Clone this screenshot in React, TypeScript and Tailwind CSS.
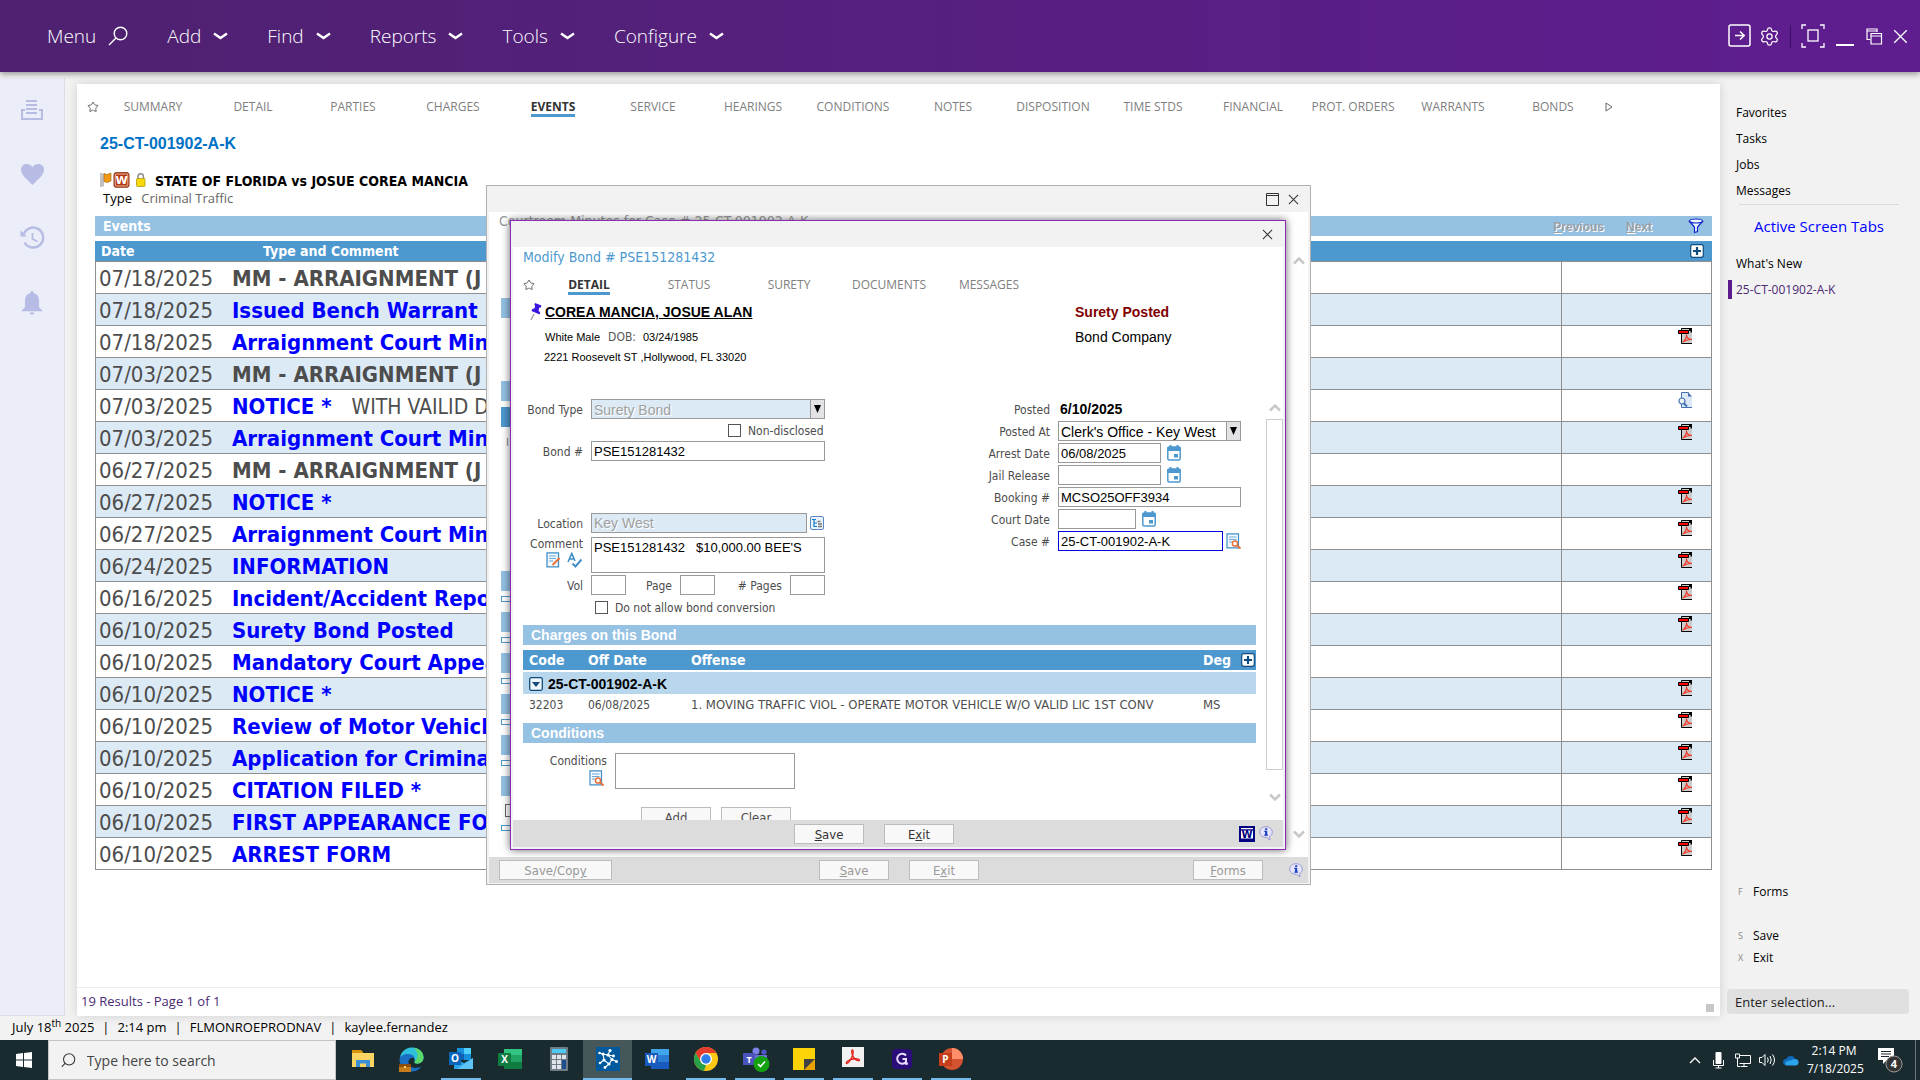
import React, { useState } from 'react';
import { Settings, Star, Search } from 'lucide-react';

const MENUS = ['Add', 'Find', 'Reports', 'Tools', 'Configure'];

const CASE_TABS = [
  'SUMMARY', 'DETAIL', 'PARTIES', 'CHARGES', 'EVENTS', 'SERVICE', 'HEARINGS', 'CONDITIONS',
  'NOTES', 'DISPOSITION', 'TIME STDS', 'FINANCIAL', 'PROT. ORDERS', 'WARRANTS', 'BONDS',
];

const BOND_TABS = ['DETAIL', 'STATUS', 'SURETY', 'DOCUMENTS', 'MESSAGES'];

type EventRow = { date: string; title: string; note?: string; plain?: boolean; doc?: 'pdf' | 'view' };

const EVENTS: EventRow[] = [
  { date: '07/18/2025', title: 'MM - ARRAIGNMENT (J', plain: true },
  { date: '07/18/2025', title: 'Issued Bench Warrant' },
  { date: '07/18/2025', title: 'Arraignment Court Minutes', doc: 'pdf' },
  { date: '07/03/2025', title: 'MM - ARRAIGNMENT (J', plain: true },
  { date: '07/03/2025', title: 'NOTICE *', note: 'WITH VAILID DL', doc: 'view' },
  { date: '07/03/2025', title: 'Arraignment Court Minutes', doc: 'pdf' },
  { date: '06/27/2025', title: 'MM - ARRAIGNMENT (J', plain: true },
  { date: '06/27/2025', title: 'NOTICE *', doc: 'pdf' },
  { date: '06/27/2025', title: 'Arraignment Court Minutes', doc: 'pdf' },
  { date: '06/24/2025', title: 'INFORMATION', doc: 'pdf' },
  { date: '06/16/2025', title: 'Incident/Accident Report', doc: 'pdf' },
  { date: '06/10/2025', title: 'Surety Bond Posted', doc: 'pdf' },
  { date: '06/10/2025', title: 'Mandatory Court Appear' },
  { date: '06/10/2025', title: 'NOTICE *', doc: 'pdf' },
  { date: '06/10/2025', title: 'Review of Motor Vehicle', doc: 'pdf' },
  { date: '06/10/2025', title: 'Application for Criminal', doc: 'pdf' },
  { date: '06/10/2025', title: 'CITATION FILED *', doc: 'pdf' },
  { date: '06/10/2025', title: 'FIRST APPEARANCE FORM', doc: 'pdf' },
  { date: '06/10/2025', title: 'ARREST FORM', doc: 'pdf' },
];

export default function App() {
  const [caseTab, setCaseTab] = useState('EVENTS');

  return (
    <div className="flex min-h-screen flex-col bg-[#f2f2f2] text-black font-[family-name:'Open_Sans','Noto_Sans',sans-serif]">
      <TopBar />

      <div className="flex flex-1">
        <LeftRail />

        {/* CASE PANEL */}
        <main className="relative mt-3 ml-3 flex flex-1 flex-col bg-white shadow-[0_0_10px_rgba(0,0,0,0.14)]">
          <nav className="flex h-[46px] items-center pl-[6px]">
            <button aria-label="Favorite" className="flex w-5 justify-center text-[#666]"><Star size={12} strokeWidth={2} /></button>
            {CASE_TABS.map((t) => (
              <Tab key={t} label={t} active={t === caseTab} onClick={() => setCaseTab(t)} />
            ))}
            <button aria-label="More tabs" className="ml-[2px]">
              <svg width="8" height="10" viewBox="0 0 8 10" fill="none" stroke="#666"><path d="M1 1v8l6-4z" /></svg>
            </button>
          </nav>

          <div className="flex flex-1 flex-col pr-2 pl-[18px]">
            <h1 className="h-7 pl-[5px] text-[16px] leading-7 font-bold text-[#0072c6] font-[family-name:'Liberation_Sans',Arial,sans-serif]">25-CT-001902-A-K</h1>
            <div className="mt-[11px] flex h-[22px] items-center pl-[5px]">
              <CaseFlags />
              <span className="pt-[2px] pl-[9px] text-[14px] font-bold font-[family-name:'DejaVu_Sans_Condensed','DejaVu_Sans',sans-serif]">STATE OF FLORIDA vs JOSUE COREA MANCIA</span>
            </div>
            <p className="h-[14px] pl-2 text-[13px] leading-[14px]">Type <span className="pl-[6px] text-[#666]">Criminal Traffic</span></p>

            <div className="mt-[11px] flex h-5 items-center bg-[#95c1e3] pr-2 pl-2 text-[14px] font-[family-name:'DejaVu_Sans_Condensed','DejaVu_Sans',sans-serif]">
              <h2 className="flex-1 font-bold text-white">Events</h2>
              <button disabled className="mt-[2px] mr-[22px] text-[12px] font-bold text-[#9aa0a6] [text-shadow:1px_1px_0_#fff] font-[family-name:'Liberation_Sans',Arial,sans-serif]"><u>P</u>revious</button>
              <button disabled className="mt-[2px] mr-9 text-[12px] font-bold text-[#9aa0a6] [text-shadow:1px_1px_0_#fff] font-[family-name:'Liberation_Sans',Arial,sans-serif]"><u>N</u>ext</button>
              <button aria-label="Filter">
                <svg width="16" height="16" viewBox="0 0 16 16" fill="#eef6fd" stroke="#1226c9" strokeWidth="1.2">
                  <path d="M1.5 3.500L6.500 9v5.500l3-1V9l5-5.500z" />
                  <ellipse cx="8" cy="3" rx="6.500" ry="2" />
                </svg>
              </button>
            </div>

            <table className="mt-[5px] w-full table-fixed border-separate border-spacing-0 font-[family-name:'DejaVu_Sans_Condensed','DejaVu_Sans',sans-serif]">
              <thead>
                <tr className="h-[21px] bg-[#4d99cf] text-left text-[14px] leading-5 text-white">
                  <th className="w-[137px] border-b border-[#8f8f8f] p-0 pl-[6px]">Date</th>
                  <th className="border-b border-[#8f8f8f] p-0 pl-[31px]">Type and Comment</th>
                  <th className="w-[151px] border-b border-[#8f8f8f] p-0 pr-2"><PlusBox /></th>
                </tr>
              </thead>
              <tbody>
                {EVENTS.map((e, i) => (
                  <tr key={i} className={`h-8 text-[22px] leading-[29px] whitespace-nowrap text-[#4d4d4d] ${i % 2 ? 'bg-[#dceaf6]' : 'bg-white'}`}>
                    <td className="border-b border-l border-[#8f8f8f] p-0 pt-[2px] pl-[3px]">{e.date}</td>
                    <td className="overflow-hidden border-b border-[#8f8f8f] p-0 pt-[2px]">
                      {e.plain ? <b>{e.title}</b> : <a href="#" className="font-bold text-[#0000ff]">{e.title}</a>}
                      {e.note && <span className="pl-5 text-[21px] leading-none">{e.note}</span>}
                    </td>
                    <td className="border-x border-b border-[#8f8f8f] p-0 pr-[19px]">
                      <div className="flex h-[27px] items-start justify-end">
                        {e.doc === 'pdf' && <PdfIcon />}
                        {e.doc === 'view' && <ViewIcon />}
                      </div>
                    </td>
                  </tr>
                ))}
              </tbody>
            </table>
          </div>

          <div className="flex h-[29px] items-center justify-between border-t border-[#ececec] pr-[6px] pl-1 text-[13px] text-[#4a2a73]">
            19 Results - Page 1 of 1
            <span className="mt-3 size-2 bg-[#c6c6c6]" />
          </div>

          <MinutesWindow />
        </main>

        <RightRail />
      </div>

      <footer className="flex h-6 gap-2 pl-3 text-[13px] leading-[22px]">
        <span>July 18<sup className="text-[10px] leading-none">th</sup> 2025</span>
        <span>|</span>
        <span>2:14 pm</span>
        <span>|</span>
        <span>FLMONROEPRODNAV</span>
        <span>|</span>
        <span>kaylee.fernandez</span>
      </footer>
      <Taskbar />
    </div>
  );
}

// APP CHROME
function TopBar() {
  return (
    <header className="z-10 flex h-[72px] items-center bg-linear-to-r from-[#4e2170] to-[#5f1d90] pr-3 pl-[47px] text-[19px] font-light text-white shadow-[0_2px_6px_rgba(0,0,0,0.4)]">
      <button className="mr-[39px] flex items-center gap-3">
        Menu
        <svg width="20" height="20" viewBox="0 0 20 20" fill="none" stroke="white" strokeWidth="1.400"><circle cx="12.500" cy="7.500" r="6.300" /><path d="M8 12l-7 7" /></svg>
      </button>
      {MENUS.map((m) => (
        <button key={m} className="mr-[39px] flex items-center gap-3">
          {m}
          <svg width="15" height="8" viewBox="0 0 15 8" fill="none" stroke="white" strokeWidth="2.400"><path d="M1 1.500l6.500 4.500L14 1.500" /></svg>
        </button>
      ))}
      <div className="ml-auto flex items-center">
        <button aria-label="Sign out" className="mr-[7px]">
          <svg width="24" height="24" viewBox="0 0 24 24" fill="none" stroke="white" strokeWidth="1.500"><rect x="1" y="1" width="21" height="21" rx="2" /><path d="M7 11.500h9M12 7.500l4.200 4-4.200 4" /></svg>
        </button>
        <button aria-label="Settings"><Settings size={21} strokeWidth={1.400} /></button>
        <span className="mx-[10px] h-[23px] w-px bg-[#3c1260]" />
        <button aria-label="Full screen">
          <svg width="24" height="24" viewBox="0 0 24 24" fill="none" stroke="white" strokeWidth="1.300"><path d="M1 5V1h4M19 1h4v4M23 19v4h-4M5 23H1v-4" /><rect x="7" y="6" width="10" height="11" /></svg>
        </button>
        <button aria-label="Minimize" className="ml-[11px] flex h-5 items-end"><span className="h-[2px] w-[18px] bg-white" /></button>
        <button aria-label="Restore" className="ml-3">
          <svg width="17" height="17" viewBox="0 0 17 17" fill="none" stroke="white" strokeWidth="1.200"><path d="M4 11.500H1V1h10v3M1 3h10M5 5.500h10.500V16H5zM5 8h10.500" /></svg>
        </button>
        <button aria-label="Close" className="ml-[10px]"><CloseX size={15} color="white" /></button>
      </div>
    </header>
  );
}

function LeftRail() {
  return (
    <aside className="mt-[6px] flex w-[65px] shrink-0 flex-col items-center gap-10 border-r border-b border-[#dcdce4] bg-[#ebeef8] pt-5 text-[#b6bce3]">
      <button aria-label="Print queue">
        <svg width="24" height="24" viewBox="0 0 24 24" stroke="currentColor" strokeWidth="2" fill="none"><path d="M6 3h11M6 7h11M6 11h11M6 15h11M5 12H2v9h20v-9h-3" /></svg>
      </button>
      <button aria-label="Favorites">
        <svg width="25" height="24" viewBox="0 0 25 24" fill="currentColor"><path d="M12.500 23C8 18 1 13.500 1 7.500 1 1.500 9 0 12.500 5 16 0 24 1.500 24 7.500c0 6-7 10.500-11.500 15.500z" /></svg>
      </button>
      <button aria-label="History">
        <svg width="26" height="24" viewBox="0 0 26 24" fill="none" stroke="currentColor" strokeWidth="2.400"><path d="M5.500 16.500A10 10 0 1 0 4.500 9" /><path d="M1.500 4.500v6h6.500z" fill="currentColor" stroke="none" /><path d="M13.500 7v6l5 2.500" strokeWidth="1.800" /></svg>
      </button>
      <button aria-label="Alerts">
        <svg width="22" height="25" viewBox="0 0 22 25" fill="currentColor"><path d="M9.500 2.500a1.500 1.500 0 0 1 3 0v.6c3.500.8 5.500 3.700 5.500 7.400v6.500l3.200 3.500v.8H.8v-.8L4 17v-6.500c0-3.700 2-6.600 5.500-7.400zM8.700 22.500h4.600a2.300 2.300 0 0 1-4.600 0z" /></svg>
      </button>
    </aside>
  );
}

function RightRail() {
  return (
    <aside className="flex w-[200px] shrink-0 flex-col pt-7 pr-[11px] pl-[7px] text-[12px] leading-[26px]">
      <nav className="flex flex-col pl-[9px]">
        <a href="#">Favorites</a>
        <a href="#">Tasks</a>
        <a href="#">Jobs</a>
        <a href="#">Messages</a>
      </nav>
      <hr className="mr-[10px] ml-3 border-[#dadada]" />
      <h3 className="mt-2 pl-[27px] text-[15px] text-[#0000ff]">Active Screen Tabs</h3>
      <a href="#" className="mt-3 pl-[9px]">What's New</a>
      <a href="#" className="mt-[3px] ml-[1px] border-l-4 border-[#5d1c8e] pl-1 leading-[19px] text-[#4a2a73]">25-CT-001902-A-K</a>

      <div className="mt-auto flex flex-col leading-[22px]">
        <Shortcut k="F" label="Forms" />
        <Shortcut k="S" label="Save" gap />
        <Shortcut k="X" label="Exit" />
      </div>
      <input
        aria-label="Enter selection"
        placeholder="Enter selection..."
        className="mt-5 mb-[2px] h-[25px] w-full rounded-[4px] bg-[#e0e0e0] px-2 text-[13px] outline-none placeholder:text-[#222]"
      />
    </aside>
  );
}

function Shortcut({ k, label, gap }: any) {
  return (
    <button className={`flex items-center text-left ${gap ? 'mt-[22px]' : ''}`}>
      <span className="w-[26px] pl-[11px] text-[9px] text-[#888]">{k}</span>{label}
    </button>
  );
}

function Tab({ label, active, onClick }: any) {
  return (
    <button onClick={onClick} className="w-[100px] shrink-0 text-center text-[12px] leading-[14px] whitespace-nowrap font-[family-name:'Open_Sans','Noto_Sans',sans-serif]">
      <span className={`inline-block border-b-[3px] pt-[3px] ${active ? 'border-[#4d99cf] font-bold text-[#333]' : 'border-transparent text-[#808080]'}`}>{label}</span>
    </button>
  );
}

// WINDOWS
function MinutesWindow() {
  return (
    <section className="absolute inset-x-0 top-[101px] mx-auto flex h-[700px] w-[825px] flex-col border border-[#b0b0b0] bg-[#f2f2f2] px-[2px] pb-[1px] font-[family-name:'DejaVu_Sans_Condensed','DejaVu_Sans',sans-serif]">
      <div className="flex h-[26px] items-center justify-end gap-[9px] pr-[9px]">
        <button aria-label="Maximize">
          <svg width="13" height="13" viewBox="0 0 13 13" fill="none" stroke="#333"><path d="M.5.500h12v12H.5zM.5 2.500h12" /></svg>
        </button>
        <button aria-label="Close"><CloseX size={11} color="#333" /></button>
      </div>

      <div className="flex flex-1 bg-white pl-3">
        <div className="flex-1">
          <h2 className="-ml-[2px] h-[18px] text-[14px] leading-[18px] text-[#999]">Courtroom Minutes for Case # 25-CT-001902-A-K</h2>
          <div className="mt-[68px] h-5 bg-[#95c1e3]" />
          <div className="mt-[63px] h-5 bg-[#95c1e3]" />
          <div className="mt-[6px] h-5 bg-[#4d99cf]" />
          <p className="h-36 pt-[10px] pl-[5px] text-[11px] leading-3 text-[#888]">I</p>
          {[0, 1, 2, 3, 4].map((i) => (
            <div key={i} className="h-[41px]">
              <div className="h-5 bg-[#95c1e3]" />
              <div className="mt-[5px] h-[6px] border border-[#4d99cf]" />
            </div>
          ))}
          <div className="h-5 bg-[#95c1e3]" />
          <input type="checkbox" aria-label="Include" className="mt-2 ml-1 block size-[13px] appearance-none border border-[#666]" />
          <div className="mt-2 h-[6px] border border-[#4d99cf]" />
        </div>
        <div className="flex w-[27px] flex-col items-center justify-between pt-11 pb-[18px] pl-[9px]">
          <Chevron up /><Chevron />
        </div>
      </div>

      <div className="flex h-[26px] items-center bg-[#dcdcdc] pr-[5px] pl-[10px] text-[13px] text-[#999]">
        <Btn wide muted><>Save/Cop<u>y</u></></Btn>
        <div className="ml-[207px] flex flex-1 gap-5"><Btn muted><><u>S</u>ave</></Btn><Btn muted><>E<u>x</u>it</></Btn></div>
        <Btn muted><><u>F</u>orms</></Btn>
        <span className="ml-[26px]"><InfoIcon /></span>
      </div>

      <BondWindow />
    </section>
  );
}

function BondWindow() {
  const [tab, setTab] = useState('DETAIL');

  return (
    <section className="absolute top-[34px] left-[23px] flex h-[630px] w-[776px] flex-col border border-[#8a2db5] bg-[#f2f2f2] px-[2px] pb-[2px] shadow-[0_0_8px_rgba(0,0,0,0.6)]">
      <div className="flex h-[26px] items-center justify-end pr-[10px]">
        <button aria-label="Close"><CloseX size={11} color="#333" /></button>
      </div>

      <div className="h-[152px] bg-white pl-[10px]">
        <h2 className="h-5 text-[14px] leading-5 text-[#4d99cf]">Modify Bond # PSE151281432</h2>
        <nav className="flex h-9 items-center">
          <button aria-label="Favorite" className="w-4 text-[#666]"><Star size={12} strokeWidth={2} /></button>
          {BOND_TABS.map((t) => (
            <Tab key={t} label={t} active={t === tab} onClick={() => setTab(t)} />
          ))}
        </nav>
        <div className="grid grid-cols-[552px_1fr] font-[family-name:'Liberation_Sans',Arial,sans-serif]">
          <div className="text-[11px] leading-4">
            <div className="flex h-[18px] items-center pl-[6px] text-[14px] leading-[18px]">
              <svg className="shrink-0" width="16" height="18" viewBox="0 0 16 18"><path d="M5 11L2 17" stroke="#aaa" strokeWidth="1.500" /><path d="M6 0l6.500 2.500-.8 2-1.500.2-.7 3 1.600 1.600-.4 2.200L2.500 8l.8-2 2-.5.9-2.500-.8-1.200z" fill="#3a14e0" /></svg>
              <a href="#" className="font-bold underline">COREA MANCIA, JOSUE ALAN</a>
            </div>
            <p className="mt-2 h-4 pl-[22px]">White Male <span className="pr-[4px] pl-[5px] text-[12px] text-[#555] font-[family-name:'DejaVu_Sans_Condensed','DejaVu_Sans',sans-serif]">DOB:</span> 03/24/1985</p>
            <p className="mt-1 h-4 pl-[21px]">2221 Roosevelt ST ,Hollywood, FL 33020</p>
          </div>
          <div className="text-[14px] leading-4">
            <p className="leading-[18px] font-bold text-[#800000]">Surety Posted</p>
            <p className="mt-2">Bond Company</p>
          </div>
        </div>
      </div>

      <div className="flex h-[421px] overflow-hidden bg-white pl-[10px] text-[12px] text-[#4d4d4d]">
        <div className="w-[733px]">
          <BondForm />
          <ChargesTable />

          <h3 className="mt-[9px] h-5 bg-[#95c1e3] pl-2 text-[14px] leading-5 font-bold text-white font-[family-name:'Liberation_Sans',Arial,sans-serif]">Conditions</h3>
          <div className="mt-[10px] flex">
            <div className="mr-2 flex w-[84px] flex-col items-end">
              <label htmlFor="conditions" className="leading-4">Conditions</label>
              <button aria-label="Look up conditions" className="mt-[1px] mr-[3px]"><LookupIcon /></button>
            </div>
            <textarea id="conditions" className="h-9 w-[180px] resize-none border border-[#999] p-[2px] outline-none" />
          </div>
          <div className="mt-[18px] flex gap-[10px] pl-[118px] text-[13px]"><Btn>Add</Btn><Btn>Clear</Btn></div>
        </div>
        <div className="ml-[10px] flex w-[17px] flex-col items-center pt-1">
          <Chevron up />
          <div className="mt-[7px] h-[351px] w-full border border-[#cdcdcd]" />
          <div className="mt-[23px]"><Chevron /></div>
        </div>
      </div>

      <div className="flex h-[27px] items-center bg-[#dcdcdc] pr-[10px] pl-[281px] text-[13px] text-[#333]">
        <div className="flex gap-5"><Btn><><u>S</u>ave</></Btn><Btn><>E<u>x</u>it</></Btn></div>
        <button aria-label="Word" className="mr-1 ml-auto">
          <svg width="16" height="16" viewBox="0 0 16 16"><path fill="#000080" d="M0 0h16v16H0z" /><path fill="#fff" d="M2 2h12v1.200H2zM2 4.500h12v8H2z" /><text x="8" y="12.300" textAnchor="middle" fontSize="10" fontWeight="bold" fill="#000080" fontFamily="DejaVu Sans">W</text></svg>
        </button>
        <InfoIcon />
      </div>
    </section>
  );
}

function BondForm() {
  return (
    <form className="flex h-[218px]">
      <div className="w-[302px]">
        <Row label="Bond Type" id="bondType"><Pick id="bondType" value="Surety Bond" size="w-[234px]" disabled /></Row>
        <div className="mt-[2px] flex h-[18px] items-center pl-[205px]">
          <Check id="nondisc" label="Non-disclosed" />
        </div>
        <Row label="Bond #" id="bondNo" className="mt-[2px]"><Field id="bondNo" value="PSE151281432" size="w-[234px]" /></Row>
        <Row label="Location" id="location" className="mt-[52px]">
          <Field id="location" value="Key West" size="w-[216px]" disabled />
          <button type="button" aria-label="Location tree" className="ml-[3px]">
            <svg width="14" height="14" viewBox="0 0 14 14" fill="none"><rect x=".5" y=".5" width="13" height="13" rx="1.500" stroke="#5d86c4" fill="#eaf2fb" /><path d="M2 3.500h4M4 3.500v7h3M4 7h3" stroke="#0a7ad1" strokeWidth="1.200" /><path d="M7.500 5.500h3M8 8h4M8 10.500h4" stroke="#777" strokeWidth="1.400" /></svg>
          </button>
        </Row>
        <div className="mt-1 flex h-9">
          <div className="mr-2 flex w-[60px] flex-col items-end">
            <label htmlFor="comment" className="leading-[14px]">Comment</label>
            <div className="mt-[1px] flex gap-[7px] pr-[1px]">
              <button type="button" aria-label="Edit comment">
                <svg width="14" height="16" viewBox="0 0 14 16" fill="none"><path d="M1 .8h11.500v14H1z" stroke="#3f8fc9" strokeWidth="1.300" fill="#f3f9fd" /><path d="M3 4h7M3 6.500h7M3 9h4" stroke="#6aa9d8" /><path d="M6.500 13L13.500 6" stroke="#e8713a" strokeWidth="2" /></svg>
              </button>
              <button type="button" aria-label="Spell check">
                <svg width="15" height="16" viewBox="0 0 15 16" fill="none" stroke="#3f8fc9"><path d="M1 10L4.800 1.500 8 9M2.200 7h5" strokeWidth="1.600" /><path d="M5.500 11.500l3 3 6-7" strokeWidth="2" /></svg>
              </button>
            </div>
          </div>
          <textarea id="comment" defaultValue="PSE151281432   $10,000.00 BEE'S" className="h-9 w-[234px] resize-none border border-[#999] px-[2px] pt-[2px] text-[13px] leading-[15px] text-black outline-none font-[family-name:'Liberation_Sans',Arial,sans-serif]" />
        </div>
        <Row label="Vol" id="vol" className="mt-[2px]">
          <Field id="vol" size="w-[35px]" />
          <label htmlFor="page" className="mr-2 w-[46px] pt-[2px] text-right">Page</label>
          <Field id="page" size="w-[35px]" />
          <label htmlFor="pages" className="mr-2 flex-1 pt-[2px] text-right whitespace-nowrap"># Pages</label>
          <Field id="pages" size="w-[35px]" />
        </Row>
        <div className="mt-[2px] flex h-5 items-center pl-[72px]"><Check id="noconv" label="Do not allow bond conversion" /></div>
      </div>

      <div className="ml-[135px] flex flex-col gap-[2px]">
        <Row label="Posted" wide><output className="pl-[2px] text-[14px] font-bold text-black font-[family-name:'Liberation_Sans',Arial,sans-serif]">6/10/2025</output></Row>
        <Row label="Posted At" id="postedAt" wide><Pick id="postedAt" value="Clerk's Office - Key West" size="w-[183px]" /></Row>
        <Row label="Arrest Date" id="arrest" wide><Field id="arrest" value="06/08/2025" size="w-[103px]" /><CalendarIcon /></Row>
        <Row label="Jail Release" id="jail" wide><Field id="jail" size="w-[103px]" /><CalendarIcon /></Row>
        <Row label="Booking #" id="booking" wide><Field id="booking" value="MCSO25OFF3934" size="w-[183px]" /></Row>
        <Row label="Court Date" id="court" wide><Field id="court" size="w-[78px]" /><CalendarIcon /></Row>
        <Row label="Case #" id="case" wide>
          <Field id="case" value="25-CT-001902-A-K" size="w-[165px]" focused />
          <button type="button" aria-label="Find case" className="ml-[3px]"><LookupIcon /></button>
        </Row>
      </div>
    </form>
  );
}

function ChargesTable() {
  return (
    <section>
      <h3 className="mt-2 h-5 bg-[#95c1e3] pl-2 text-[14px] leading-5 font-bold text-white font-[family-name:'Liberation_Sans',Arial,sans-serif]">Charges on this Bond</h3>
      <table className="mt-[5px] w-full table-fixed border-separate border-spacing-0 text-left">
        <thead>
          <tr className="h-5 bg-[#4d99cf] text-[14px] leading-5 text-white">
            <th className="w-[65px] p-0 pl-[6px]">Code</th>
            <th className="w-[103px] p-0">Off Date</th>
            <th className="p-0">Offense</th>
            <th className="w-[53px] p-0"><span className="flex items-center justify-between pr-[1px]">Deg <PlusBox /></span></th>
          </tr>
        </thead>
        <tbody>
          <tr className="h-6">
            <td colSpan={4} className="border-t-2 border-white bg-[#b8d6ec] p-0 pl-[6px]">
              <button className="flex h-[22px] items-center gap-[5px] pt-[2px] text-[14px] leading-5 font-bold text-black font-[family-name:'Liberation_Sans',Arial,sans-serif]">
                <svg width="14" height="14" viewBox="0 0 14 14"><rect x=".7" y=".7" width="12.600" height="12.600" rx="1.500" fill="#eef6fc" stroke="#0f4c7d" strokeWidth="1.300" /><path d="M3 5h8l-4 5z" fill="#0f4c7d" /></svg>
                25-CT-001902-A-K
              </button>
            </td>
          </tr>
          <tr className="h-5 leading-[18px]">
            <td className="p-0 pt-[2px] pl-[6px]">32203</td>
            <td className="p-0 pt-[2px]">06/08/2025</td>
            <td className="p-0 pt-[2px] text-[13px] whitespace-nowrap">1. MOVING TRAFFIC VIOL - OPERATE MOTOR VEHICLE W/O VALID LIC 1ST CONV</td>
            <td className="p-0 pt-[2px] text-[13px]">MS</td>
          </tr>
        </tbody>
      </table>
    </section>
  );
}

// FORM PIECES
function Row({ label, id, wide, className = '', children }: any) {
  return (
    <div className={`flex h-5 items-center ${className}`}>
      <label htmlFor={id} className={`mr-2 shrink-0 pt-[2px] text-right whitespace-nowrap ${wide ? 'w-[90px]' : 'w-[60px]'}`}>{label}</label>
      {children}
    </div>
  );
}

function Field({ id, value = '', size, disabled, focused }: any) {
  return (
    <input
      id={id}
      defaultValue={value}
      disabled={disabled}
      className={`h-5 shrink-0 border px-[2px] outline-none font-[family-name:'Liberation_Sans',Arial,sans-serif] ${size} ${focused ? 'border-[#0000e0]' : 'border-[#999]'} ${disabled ? 'bg-[#dceaf6] text-[14px] text-[#a0a0a0] [text-shadow:1px_1px_0_#fff]' : 'bg-white text-[13px] text-black'}`}
    />
  );
}

function Pick({ id, value, size, disabled }: any) {
  return (
    <div className={`relative h-5 ${size}`}>
      <select
        id={id}
        disabled={disabled}
        className={`h-5 w-full appearance-none border border-[#999] pt-[2px] pl-[2px] text-[14px] leading-4 opacity-100 outline-none font-[family-name:'Liberation_Sans',Arial,sans-serif] ${disabled ? 'bg-[#dceaf6] text-[#a0a0a0] [text-shadow:1px_1px_0_#fff]' : 'bg-white text-black'}`}
      >
        <option>{value}</option>
      </select>
      <span className="pointer-events-none absolute inset-y-0 right-0 flex w-[15px] items-center justify-center border border-[#999] bg-[#e3e3e6]">
        <svg width="7" height="8" viewBox="0 0 7 8"><path d="M0 0h7L3.500 8z" fill="#000" /></svg>
      </span>
    </div>
  );
}

function Check({ id, label }: any) {
  return (
    <>
      <input id={id} type="checkbox" className="size-[13px] appearance-none border border-[#555] bg-white" />
      <label htmlFor={id} className="pt-[2px] pl-[7px]">{label}</label>
    </>
  );
}

function Btn({ children, wide, muted }: any) {
  return (
    <button disabled={muted} className={`h-5 border border-[#bcbcbc] bg-[#f8f8f8] leading-[19px] ${wide ? 'w-[113px]' : 'w-[70px]'}`}>{children}</button>
  );
}

// SMALL ICONS
function CloseX({ size, color }: any) {
  return <svg width={size} height={size} viewBox="0 0 12 12" stroke={color} strokeWidth="1.100"><path d="M1 1l10 10M11 1L1 11" /></svg>;
}

function Chevron({ up }: any) {
  return <svg width="12" height="9" viewBox="0 0 12 9" fill="none" stroke="#c8c8c8" strokeWidth="2.500"><path d={up ? 'M1 7.500l5-5 5 5' : 'M1 1.500l5 5 5-5'} /></svg>;
}

function PlusBox() {
  return (
    <svg className="ml-auto" width="14" height="14" viewBox="0 0 14 14"><rect x=".7" y=".7" width="12.600" height="12.600" rx="2" fill="#fff" stroke="#0f4c7d" strokeWidth="1.200" /><path d="M7 3v8M3 7h8" stroke="#0f4c7d" strokeWidth="2.200" /></svg>
  );
}

function PdfIcon() {
  return (
    <svg width="14" height="16" viewBox="0 0 14 16"><path d="M3.500.500H14v15H3.500z" fill="#ccc" /><path d="M14 .5H3.500v15H14" fill="none" stroke="#000" /><path d="M11 0h3v4.500h-1.500V3H11z" fill="#000" /><path d="M.5 2.500h10v3H.5z" fill="#f00" stroke="#000" /><path d="M4.500 14c2-1 4-4 4-7.500 0 3 2 5 5.500 5-3-.5-6 .3-9.500 2.500z" fill="none" stroke="#f23b2f" strokeWidth="1.200" /></svg>
  );
}

function ViewIcon() {
  return (
    <svg width="14" height="16" viewBox="0 0 14 16"><path d="M3.500.500h7l3.500 4v11H3.500z" fill="#dde8f6" /><path d="M14 15.500H3.500V.500h7" fill="none" stroke="#4472b0" /><path d="M10 0v4.500h4z" fill="#4472b0" /><circle cx="4" cy="9" r="3" fill="#eef4fb" stroke="#4472b0" strokeWidth="1.200" /><path d="M6 11.500l3 3" stroke="#4472b0" strokeWidth="2" /></svg>
  );
}

function LookupIcon() {
  return (
    <svg width="15" height="16" viewBox="0 0 15 16" fill="none"><path d="M1 .8h11.500v14H1z" stroke="#3f8fc9" strokeWidth="1.200" fill="#f3f9fd" /><path d="M3 4h7.500M3 6.500h7.500M3 9h3" stroke="#6aa9d8" /><circle cx="9" cy="10.500" r="2.600" stroke="#e8713a" strokeWidth="1.500" fill="#fff" /><path d="M11 12.500l3.500 3" stroke="#e8713a" strokeWidth="2" /></svg>
  );
}

function CalendarIcon() {
  return (
    <button type="button" aria-label="Pick date" className="ml-[6px]">
      <svg width="14" height="16" viewBox="0 0 14 16"><path d="M2.500 0h2v2h-2zM9.500 0h2v2h-2z" fill="#4d99cf" /><rect x=".8" y="2" width="12.400" height="13" rx="1.500" fill="#fff" stroke="#4d99cf" strokeWidth="1.500" /><path d="M.5 2h13v4H.5z" fill="#4d99cf" /><path d="M7 9h4v3.500H7z" fill="#4d99cf" /></svg>
    </button>
  );
}

function InfoIcon() {
  return (
    <svg width="14" height="15" viewBox="0 0 14 15"><path d="M7 .7c3.600 0 6.300 2.300 6.300 5.300 0 2.500-1 3.500-2.800 4.500l.5 3.500-3.500-2.700C3.500 11.300.7 9.200.7 6 .7 3 3.400.7 7 .7z" fill="#e4e4fa" stroke="#9a9ad0" /><path d="M6.200 2.300h2v1.700h-2zM5.300 4.800h2.900v3.700h.8v1.200H5.300V8.500h.8V6h-.8z" fill="#1a3fc0" /></svg>
  );
}

function CaseFlags() {
  return (
    <svg width="46" height="16" viewBox="0 0 46 16">
      <path d="M1 1v14M3 1.500v13" stroke="#999" strokeWidth="1.200" /><path d="M4 1.500l3 1 4-1.500v8l-4 1.500-3-1z" fill="#f39a12" stroke="#a35c05" strokeWidth=".6" />
      <rect x="14" y=".7" width="15" height="14.500" rx="2" fill="#b5390f" stroke="#8d2a08" /><rect x="15.200" y="2" width="12.600" height="12" rx="1" fill="none" stroke="#f3d9cf" strokeWidth=".8" />
      <text x="21.500" y="12" textAnchor="middle" fontSize="11" fontWeight="bold" fill="#fff" fontFamily="DejaVu Sans">W</text>
      <path d="M38 7V4.500a2.700 2.700 0 0 1 5.400 0V7" fill="none" stroke="#8f8f8f" strokeWidth="1.500" /><rect x="36.500" y="6.500" width="8.500" height="8" rx="1" fill="#f7d90c" stroke="#a98c00" strokeWidth=".7" />
    </svg>
  );
}

// TASKBAR
function Office({ c1, c2, c3, letter, round }: any) {
  return (
    <svg width="24" height="24" viewBox="0 0 24 24">
      {round ? (
        <><circle cx="13" cy="12" r="11" fill={c2} /><path d="M13 1a11 11 0 0 1 11 11H13z" fill={c1} /></>
      ) : (
        <><path d="M6 2h18v7H6z" fill={c1} /><path d="M6 8h18v8H6z" fill={c2} /><path d="M6 15h18v7H6z" fill={c3} /></>
      )}
      <path d="M0 6h13v13H0z" fill={c3} />
      <text x="6.500" y="16" textAnchor="middle" fontSize="10" fontWeight="bold" fill="#fff" fontFamily="Open Sans">{letter}</text>
    </svg>
  );
}

const APPS = [
  { name: 'File Explorer', icon: <svg width="22" height="20" viewBox="0 0 22 20"><path d="M0 1h9l2 2v4H0z" fill="#d9930c" /><path d="M0 4h22v14H0z" fill="#fcd462" /><path d="M4 11h14v7h-4v-3.500H8V18H4z" fill="#3b8fd4" /></svg> },
  { name: 'Edge', icon: <svg width="25" height="25" viewBox="0 0 25 25"><path d="M1 10C3 3 8 .5 13 .5c7 0 11.500 4.500 11.500 10 0 4-3 6-6.500 6-2.500 0-3-1-2.300-2.500C16 11 14 9 11 9c-4 0-8 .5-10 1z" fill="#2fc0dc" /><path d="M15 .7c6 1 9.500 5 9.500 9.800 0 4-3 6-6.500 6-1.500 0-2.500-.5-2.500-1.500C19.500 11 20 6 15 .7z" fill="#5bd96a" /><path d="M.5 13C.5 8 6 6.500 10 7c4 .5 5.500 2.500 5.500 4.500C13 9.500 9 12 9.500 16c.5 4.500 6 6.500 13 3.500-2 3-6 5-10 5C5.500 24.500.5 19 .5 13z" fill="#1b6fc4" /><path d="M0 17h12v8H0z" fill="#c77a1c" /><path d="M0 17h12v3H0z" fill="#8a4d0c" /><path d="M5 19h2v2H5z" fill="#fcd462" /></svg> },
  { name: 'Outlook', open: true, icon: <svg width="24" height="24" viewBox="0 0 24 24"><path d="M8 1h14v12H8z" fill="#1490df" /><path d="M15 1h7v6h-7z" fill="#50d0ff" /><path d="M8 7h7v6H8z" fill="#0f5fb0" /><path d="M5 11l10 5 9-5v11H5z" fill="#28a8ea" /><path d="M24 11v11H8z" fill="#5fc3f5" /><path d="M0 5h12v13H0z" fill="#0a64bc" /><text x="6" y="15" textAnchor="middle" fontSize="10" fontWeight="bold" fill="#fff" fontFamily="Open Sans">O</text></svg> },
  { name: 'Excel', icon: <Office c1="#33c481" c2="#21a366" c3="#107c41" letter="X" /> },
  { name: 'Calculator', icon: <svg width="18" height="24" viewBox="0 0 18 24"><rect width="18" height="24" rx="1" fill="#6f7b85" /><path d="M2 2h14v4H2z" fill="#4cc9f2" /><path d="M2 8h4v4H2zM7 8h4v4H7zM12 8h4v4h-4zM2 13h4v4H2zM7 13h4v4H7zM2 18h4v4H2zM7 18h4v4H7z" fill="#dfe5ea" /><path d="M12 13h4v9h-4z" fill="#1d4f91" /></svg> },
  { name: 'Navigator', open: true, current: true, icon: <svg width="24" height="24" viewBox="0 0 24 24"><path d="M0 0h24v24H0z" fill="#00599c" /><path d="M14 3.500L12 8 7 7 3.500 6M7 7l1 6-4 3M8 13l5 4-4 3.500M13 17l3-4.500 4.500 2M16 12.500L12 8l5.500 1" fill="none" stroke="#fff" strokeWidth="1.100" /><g fill="#fff"><circle cx="14" cy="3.500" r="1.600" /><circle cx="12" cy="8" r="1.600" /><circle cx="7" cy="7" r="1.600" /><circle cx="3.500" cy="6" r="1.300" /><circle cx="8" cy="13" r="1.600" /><circle cx="4" cy="16" r="1.300" /><circle cx="13" cy="17" r="1.600" /><circle cx="9" cy="20.500" r="1.400" /><circle cx="16" cy="12.500" r="1.600" /><circle cx="20.500" cy="14.500" r="1.500" /><circle cx="17.500" cy="9" r="1.400" /></g></svg> },
  { name: 'Word', icon: <Office c1="#41a5ee" c2="#2b7cd3" c3="#185abd" letter="W" /> },
  { name: 'Chrome', open: true, icon: <svg width="24" height="24" viewBox="0 0 24 24"><circle cx="12" cy="12" r="12" fill="#fbc816" /><path d="M1.600 6A12 12 0 0 1 22.400 6H12l-5.200 9z" fill="#e33b2e" /><path d="M1.600 6l5.200 9 5.200 3-2 5.800A12 12 0 0 1 1.600 6z" fill="#27a04a" /><circle cx="12" cy="12" r="6" fill="#fff" /><circle cx="12" cy="12" r="4.700" fill="#2f7de9" /></svg> },
  { name: 'Teams', open: true, icon: <svg className="ml-1" width="27" height="25" viewBox="0 0 27 25"><circle cx="13" cy="4" r="3.500" fill="#7b83eb" /><circle cx="21" cy="5" r="2.600" fill="#5059c9" /><path d="M8 8h16v8a6 6 0 0 1-12 4z" fill="#6870d8" /><path d="M0 6h12v12H0z" fill="#4b53bc" /><text x="6" y="15.500" textAnchor="middle" fontSize="9" fontWeight="bold" fill="#fff" fontFamily="Open Sans">T</text><circle cx="18.500" cy="17" r="8" fill="#13a10e" /><path d="M15 17l2.500 2.500 4.500-5" fill="none" stroke="#fff" strokeWidth="1.600" /></svg> },
  { name: 'Sticky Notes', open: true, icon: <svg width="22" height="22" viewBox="0 0 22 22"><path d="M0 0h22v22H0z" fill="#fcd307" /><path d="M22 11v11H11z" fill="#e8a100" /><path d="M11 11h11L11 22z" fill="#404040" /></svg> },
  { name: 'Acrobat', open: true, icon: <svg className="mb-1" width="22" height="20" viewBox="0 0 22 20"><path d="M0 0h22v20H0z" fill="#f1f1f1" /><path d="M4.500 16.500c-1.500-1 3-4 6-4.500s7-.3 7 1-2.500.8-4.500-1S9 5.500 9.800 3.500s2 .5 1 4-4 9.500-6.300 9z" fill="none" stroke="#e2231a" strokeWidth="1.300" /></svg> },
  { name: 'Grapevine', open: true, icon: <svg width="20" height="20" viewBox="0 0 20 20"><rect width="20" height="20" rx="4" fill="#2b0d7a" /><path d="M14 6.500A5 5 0 1 0 14 13v-3h-3.500" fill="none" stroke="#e8dcff" strokeWidth="2" /><circle cx="14.500" cy="14.500" r="1.500" fill="#e8dcff" /></svg> },
  { name: 'PowerPoint', open: true, icon: <Office round c1="#ff8f6b" c2="#d35230" c3="#c43e1c" letter="P" /> },
];

function Taskbar() {
  return (
    <div className="flex h-10 items-stretch bg-[#1a2b30] text-white">
      <button aria-label="Start" className="flex w-12 items-center justify-center">
        <svg width="16" height="16" viewBox="0 0 16 16" fill="#fff"><path d="M0 2l7-1v6.500H0zM8 .9L16 0v7.500H8zM0 8.500h7V15l-7-1zM8 8.500h8V16l-8-1z" /></svg>
      </button>
      <label className="flex w-[288px] items-center border border-[#c4c4c4] bg-[#f2f2f2] pl-[11px] text-[#333]">
        <Search size={18} strokeWidth={1.500} className="-scale-x-100" />
        <input aria-label="Search" placeholder="Type here to search" className="w-full bg-transparent pl-[10px] text-[14px] outline-none placeholder:text-[#444]" />
      </label>
      <div className="ml-[2px] flex">
        {APPS.map((a) => (
          <button key={a.name} aria-label={a.name} className={`flex w-[49px] flex-col items-center ${a.current ? 'bg-[#46575a]' : ''}`}>
            <span className="flex h-[38px] items-center">{a.icon}</span>
            {a.open && <span className={`h-[2px] bg-[#76b9ed] ${a.current ? 'w-full' : 'w-10'}`} />}
          </button>
        ))}
      </div>
      <div className="ml-auto flex items-center text-[12px]">
        <svg className="mr-3" width="12" height="7" viewBox="0 0 12 7" fill="none" stroke="#fff" strokeWidth="1.300"><path d="M1 6l5-5 5 5" /></svg>
        <svg className="mr-[11px]" width="11" height="17" viewBox="0 0 11 17" fill="#fff"><rect x="2.500" width="6" height="12" rx="1" /><path d="M.5 8v5.500h10V8M5.500 13.500V16M2.500 16h6" fill="none" stroke="#fff" /></svg>
        <svg className="mr-2" width="16" height="15" viewBox="0 0 16 15" fill="none" stroke="#fff"><path d="M5 2.500h10.500v8H4.500M9 10.500v3M5.500 13.500h7M.5 1h4v4h-4zM2.500 5v8.500H5" /></svg>
        <svg className="mr-[7px]" width="17" height="14" viewBox="0 0 17 14" fill="none" stroke="#fff"><path d="M.5 4.500h2.500l3-3v11l-3-3H.5zM8.500 4.500q1.500 2.500 0 5M11 3q2.500 4 0 8M13.500 1.500q4 5.500 0 11" /></svg>
        <svg className="mr-2" width="16" height="11" viewBox="0 0 16 11"><path d="M3 10a3 3 0 0 1 .2-6A5 5 0 0 1 12 3.500L9 9z" fill="#0f6cbd" /><path d="M3 10.500a3 3 0 0 1 .5-4l5-1.500 3.500-1a3.300 3.300 0 0 1 1 6.500z" fill="#2aa5ec" /></svg>
        <div className="w-[54px] text-center leading-[18px] whitespace-nowrap">2:14 PM<br />7/18/2025</div>
        <svg className="mr-[12px] ml-[17px]" width="25" height="26" viewBox="0 0 25 26"><path d="M0 1h16v12H9l-4 4v-4H0z" fill="#fff" /><path d="M3 4.500h10M3 7h10M3 9.500h8" stroke="#1a2b30" /><circle cx="16" cy="17" r="8" fill="#333" stroke="#999" /><text x="16" y="21" textAnchor="middle" fontSize="11" fontWeight="bold" fill="#fff" fontFamily="Open Sans">4</text></svg>
        <span className="mr-1 h-full w-px bg-[#6a7679]" />
      </div>
    </div>
  );
}
